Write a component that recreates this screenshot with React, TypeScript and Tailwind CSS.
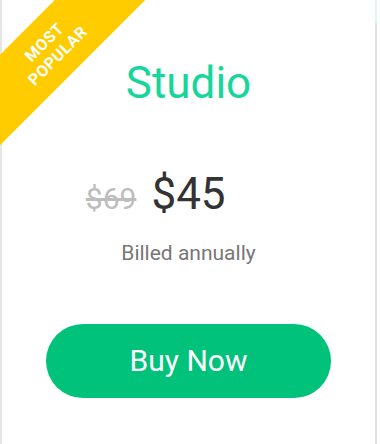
import React from "react";

export default function App() {
  return (
    <div className="w-[380px] h-[444px] bg-white flex overflow-hidden" style={{ fontFamily: "Roboto, 'Liberation Sans', sans-serif" }}>
      <div className="w-[2px] h-full bg-[#e6e6e6] shrink-0" />
      <div className="relative w-[373px] h-full shrink-0 bg-white">
        <div className="absolute top-0 left-[-2px] w-[160px] h-[160px] overflow-hidden pointer-events-none">
          <div className="absolute left-[-61px] top-[17px] w-[224px] h-[64px] bg-[#ffcc00] -rotate-45 flex flex-col items-center justify-center text-white font-bold text-[16px] leading-[19px] tracking-[0.6px]">
            <span>MOST</span>
            <span>POPULAR</span>
          </div>
        </div>
        <div className="flex flex-col items-center pt-[61px]">
          <h1 className="text-[44px] leading-[44px] text-[#17d69c] font-normal">Studio</h1>
          <div className="w-full grid grid-cols-[1fr_auto_1fr] items-baseline gap-[15px] mt-[67px]">
            <span className="justify-self-end text-[30px] leading-none text-[#bdbdbd] line-through">$69</span>
            <span className="text-[44px] leading-none text-[#333333]">$45</span>
            <span />
          </div>
          <div className="mt-[27px] text-[21px] leading-none text-[#777777]">Billed annually</div>
          <button className="mt-[60px] w-[285px] h-[74px] rounded-full bg-[#00c27a] text-white text-[30px] leading-none">Buy Now</button>
        </div>
      </div>
      <div className="w-[2px] h-full shrink-0 flex flex-col">
        <div className="h-[23px] bg-[#e3f4f8]" />
        <div className="flex-1 bg-[#e0e0e0]" />
      </div>
    </div>
  );
}
